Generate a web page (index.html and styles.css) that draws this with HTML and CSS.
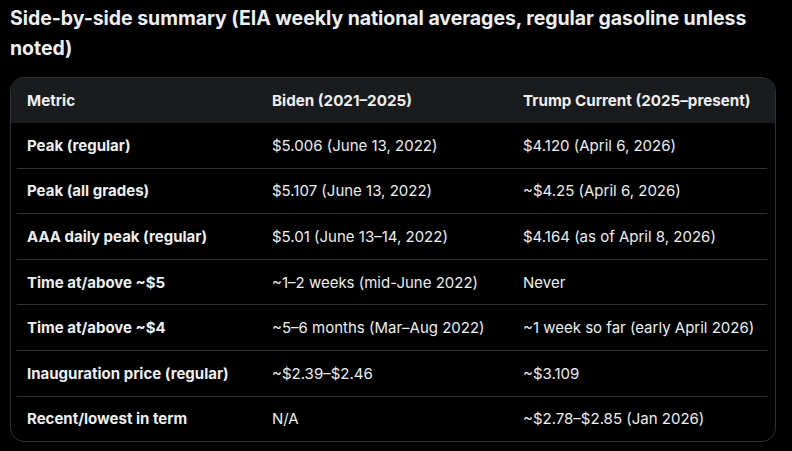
FILE: index.html
```html
<!DOCTYPE html>
<html lang="en">
<head>
<meta charset="utf-8">
<title>Side-by-side summary</title>
<link rel="stylesheet" href="styles.css">
</head>
<body>
<h2 class="title">Side-by-side summary (EIA weekly national averages, regular gasoline unless noted)</h2>
<div class="card">
  <div class="head">
    <div class="row">
      <div class="cell">Metric</div>
      <div class="cell">Biden (2021–2025)</div>
      <div class="cell">Trump Current (2025–present)</div>
    </div>
  </div>
  <div class="body">
    <div class="row"><div class="cell key">Peak (regular)</div><div class="cell">$5.006 (June 13, 2022)</div><div class="cell">$4.120 (April 6, 2026)</div></div>
    <div class="row"><div class="cell key">Peak (all grades)</div><div class="cell">$5.107 (June 13, 2022)</div><div class="cell">~$4.25 (April 6, 2026)</div></div>
    <div class="row"><div class="cell key">AAA daily peak (regular)</div><div class="cell">$5.01 (June 13–14, 2022)</div><div class="cell">$4.164 (as of April 8, 2026)</div></div>
    <div class="row"><div class="cell key">Time at/above ~$5</div><div class="cell">~1–2 weeks (mid-June 2022)</div><div class="cell">Never</div></div>
    <div class="row"><div class="cell key">Time at/above ~$4</div><div class="cell">~5–6 months (Mar–Aug 2022)</div><div class="cell">~1 week so far (early April 2026)</div></div>
    <div class="row"><div class="cell key">Inauguration price (regular)</div><div class="cell">~$2.39–$2.46</div><div class="cell">~$3.109</div></div>
    <div class="row"><div class="cell key">Recent/lowest in term</div><div class="cell">N/A</div><div class="cell">~$2.78–$2.85 (Jan 2026)</div></div>
  </div>
</div>
</body>
</html>
```
FILE: styles.css
```css
html, body {
  margin: 0;
  padding: 0;
  background: #000;
}
body {
  color: #eceeef;
  font-family: Inter, "Liberation Sans", sans-serif;
  padding: 3px 10px 0 10px;
}
.title {
  margin: 0;
  font-size: 19.5px;
  font-weight: 700;
  line-height: 30px;
  letter-spacing: -0.05px;
}
.card {
  margin-top: 14px;
  width: 766px;
  box-sizing: border-box;
  border: 1px solid #2f3336;
  border-radius: 14px;
  overflow: hidden;
}
.head {
  background: #1a1b1d;
}
.head .row {
  height: 45px;
  font-weight: 700;
  font-size: 15.2px;
}
.row {
  display: grid;
  grid-template-columns: 245px 251px 1fr;
  align-items: center;
  margin: 0 8px 0 6px;
  font-size: 15px;
}
.body .row {
  height: 44.6px;
}
.body .row + .row {
  border-top: 1px solid #2f3336;
}
.cell {
  padding-left: 10px;
  white-space: nowrap;
}
.key {
  font-weight: 700;
}
```
